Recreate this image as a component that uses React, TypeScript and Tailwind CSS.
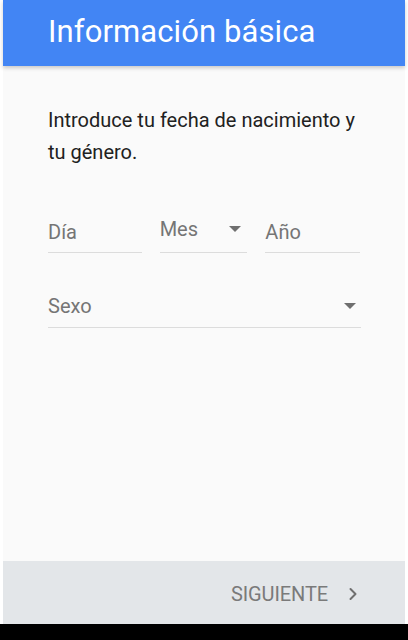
import { ChevronRight } from 'lucide-react'

function Caret() {
  return (
    <svg width="12" height="6" viewBox="0 0 12 6" className="shrink-0">
      <path d="M0 0 L12 0 L6 6 Z" fill="#6f6f6f" />
    </svg>
  )
}

export default function App() {
  return (
    <div
      className="w-[408px] h-[640px] bg-white flex flex-col overflow-hidden"
      style={{ fontFamily: 'Roboto, "Noto Sans", sans-serif' }}
    >
      <div className="flex-1 flex flex-col px-[3px]">
        {/* Header */}
        <div className="h-[66px] bg-[#4285f4] shadow-[0_2px_4px_rgba(0,0,0,0.2)] relative z-10 flex items-start pl-[45px] pt-[13px]">
          <h1 className="text-white text-[31px] leading-[38px] font-normal tracking-[0.1px]">Información básica</h1>
        </div>

        {/* Content */}
        <div className="flex-1 bg-[#fafafa] px-[45px] pt-[38px]">
          <p className="text-[#212121] text-[20px] leading-[32px]">
            Introduce tu fecha de nacimiento y tu género.
          </p>

          <div className="flex items-end mt-[43px] gap-[18px]">
            <div className="w-[94px] h-[42px] border-b border-[#dcdcdc] flex items-start pt-[9px]">
              <span className="text-[#757575] text-[20px] leading-[24px]">Día</span>
            </div>
            <div className="w-[88px] h-[42px] border-b border-[#dcdcdc] flex items-start justify-between pt-[6px] pr-[6px]">
              <span className="text-[#757575] text-[20px] leading-[24px]">Mes</span>
              <div className="mt-[9px]"><Caret /></div>
            </div>
            <div className="w-[95px] h-[42px] border-b border-[#dcdcdc] flex items-start pt-[9px]">
              <span className="text-[#757575] text-[20px] leading-[24px]">Año</span>
            </div>
          </div>

          <div className="mt-[33px] w-[313px] h-[42px] border-b border-[#dcdcdc] flex items-start justify-between pt-[8px] pr-[5px]">
            <span className="text-[#757575] text-[20px] leading-[24px]">Sexo</span>
            <div className="mt-[9px]"><Caret /></div>
          </div>
        </div>

        {/* Footer */}
        <div className="h-[63px] bg-[#e3e6e9] flex items-center justify-end pr-[42px] pt-[2px]">
          <span className="text-[#7a7a7a] text-[20px] tracking-[-0.1px]">SIGUIENTE</span>
          <ChevronRight size={20} strokeWidth={2.4} className="text-[#6f6f6f] ml-[15px]" />
        </div>
      </div>
      <div className="h-[16px] bg-black" />
    </div>
  )
}
